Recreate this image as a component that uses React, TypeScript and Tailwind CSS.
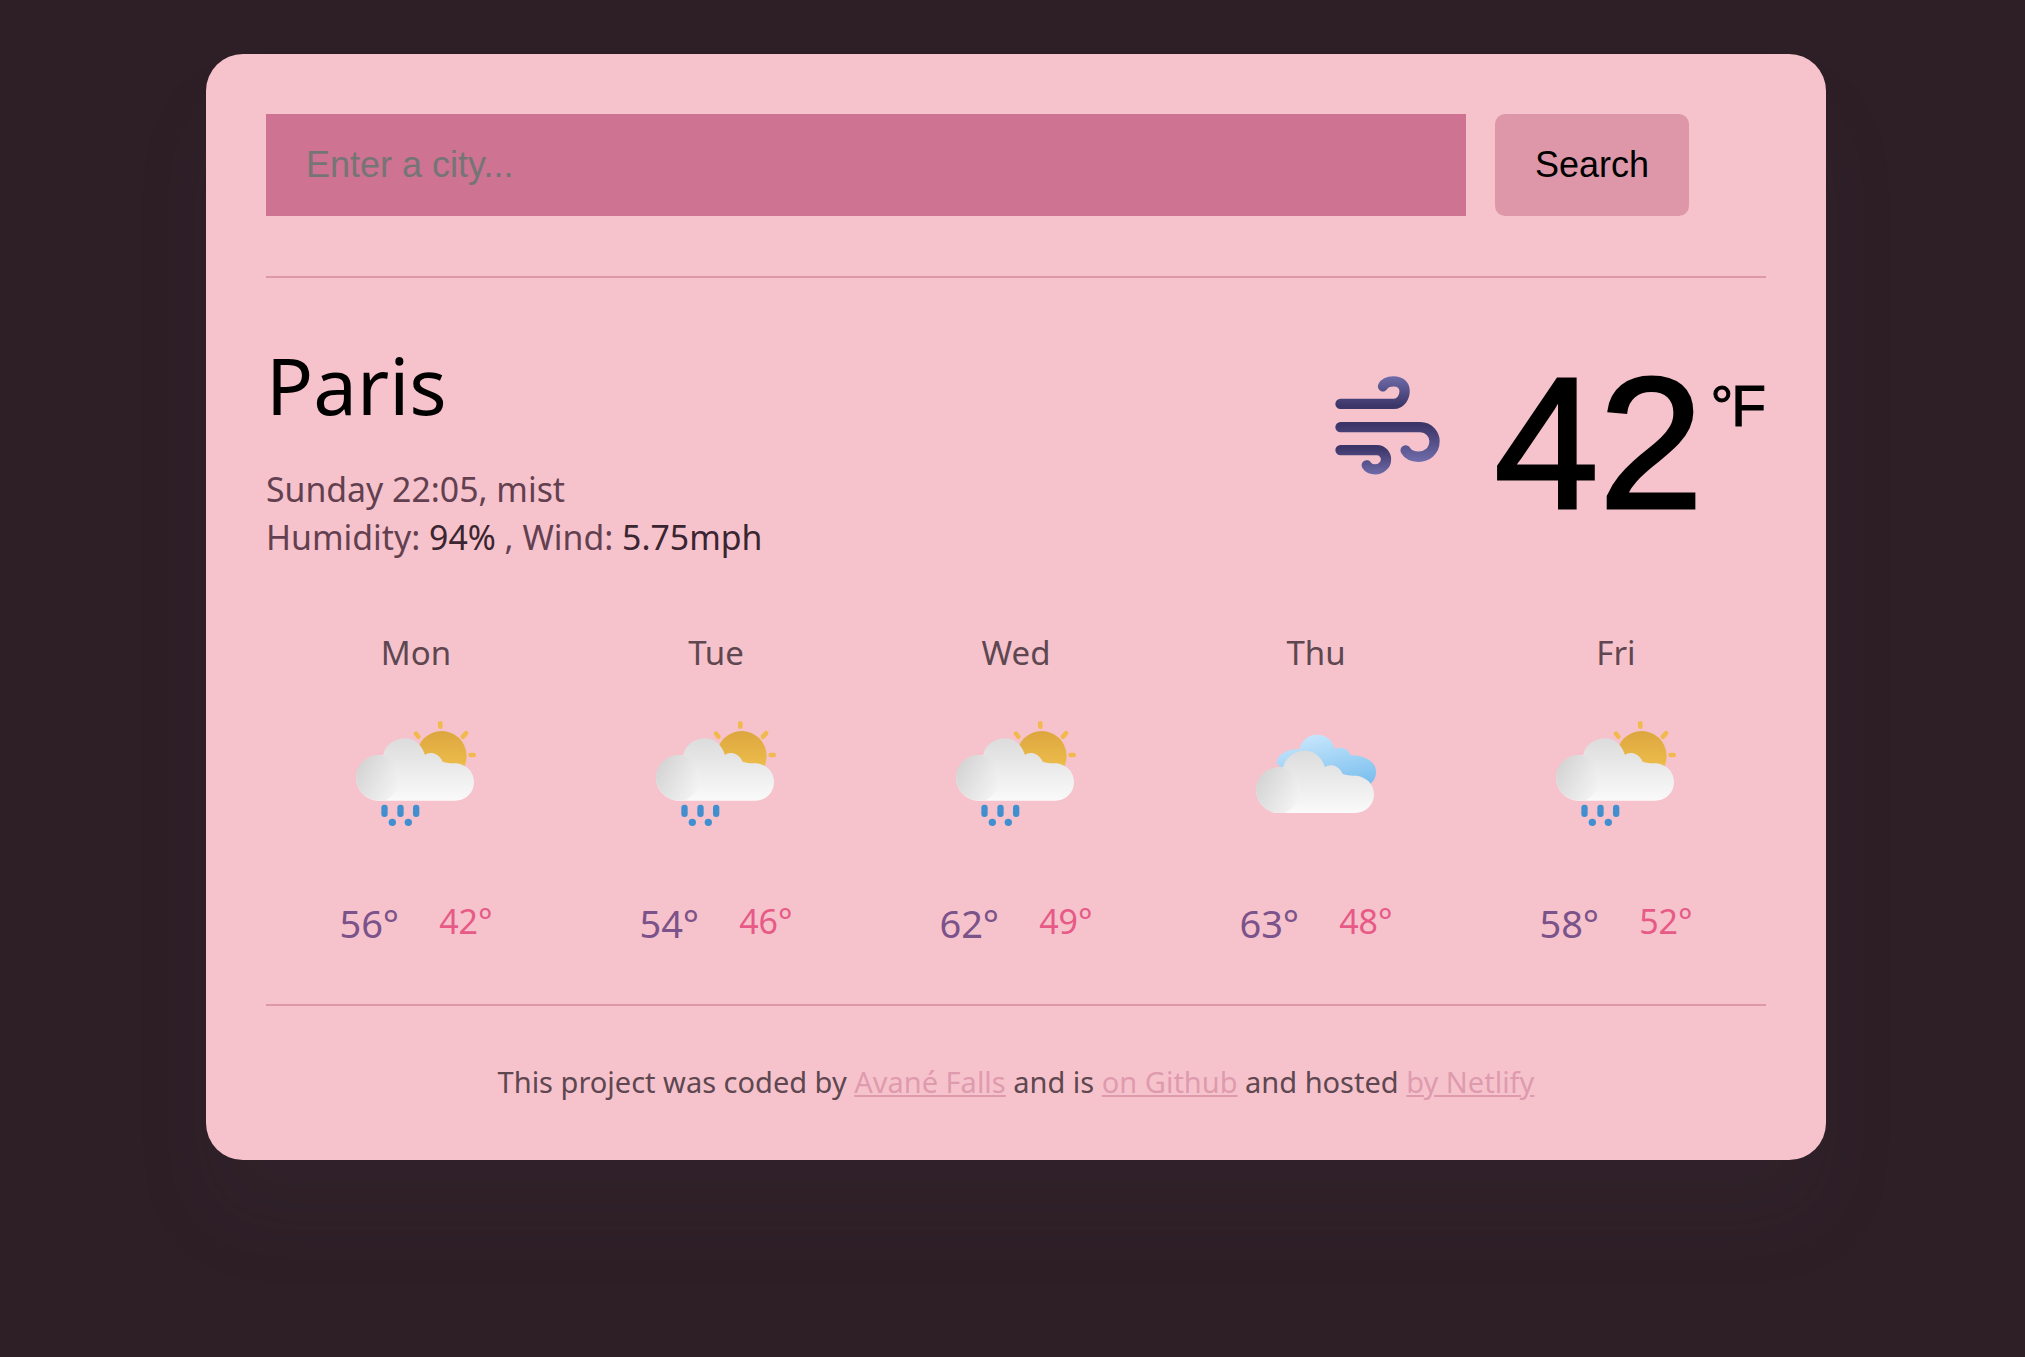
const sans = "font-['Noto_Sans','Lato',sans-serif]";

const days = [
  { name: "Mon", max: "56°", min: "42°", icon: "rain" },
  { name: "Tue", max: "54°", min: "46°", icon: "rain" },
  { name: "Wed", max: "62°", min: "49°", icon: "rain" },
  { name: "Thu", max: "63°", min: "48°", icon: "cloud" },
  { name: "Fri", max: "58°", min: "52°", icon: "rain" },
];

function CloudBody({ id }: { id: string }) {
  return (
    <>
      <defs>
        <linearGradient id={`${id}-body`} x1="0" y1="0" x2="0" y2="1">
          <stop offset="0" stopColor="#dcdcdc" />
          <stop offset="1" stopColor="#fafafa" />
        </linearGradient>
        <linearGradient id={`${id}-left`} x1="0" y1="0" x2="1" y2="0.6">
          <stop offset="0" stopColor="#cfcfcf" />
          <stop offset="1" stopColor="#f2f2f2" />
        </linearGradient>
      </defs>
      <path
        fill={`url(#${id}-body)`}
        d="M115 302 C80 302 48 270 48 234 C48 198 85 163 130 165 C135 135 165 115 195 115 C225 115 245 135 255 165 C265 155 295 155 308 185 C325 190 335 190 350 190 C380 195 402 215 402 246 C402 278 378 302 345 302 Z"
      />
      <path
        fill={`url(#${id}-left)`}
        d="M115 302 C80 302 48 270 48 232 C48 195 80 165 115 165 C150 165 180 195 180 232 C180 262 165 285 135 302 Z"
      />
    </>
  );
}

function RainIcon({ id }: { id: string }) {
  return (
    <svg width="160" height="150" viewBox="-12 0 480 450" className="blur-[0.5px]">
      <defs>
        <linearGradient id={`${id}-sun`} x1="0" y1="0" x2="0" y2="1">
          <stop offset="0" stopColor="#dda63f" />
          <stop offset="1" stopColor="#f3c650" />
        </linearGradient>
      </defs>
      <g stroke="#f2b94f" strokeWidth="14" strokeLinecap="round">
        <path d="M301 70 V80" />
        <path d="M228 101 L235 110" />
        <path d="M378 100 L369 110" />
        <path d="M392 165 H401" />
      </g>
      <circle cx="305" cy="168" r="75" fill={`url(#${id}-sun)`} />
      <CloudBody id={id} />
      <g fill="#418fcf">
        <rect x="124" y="314" width="19" height="37" rx="9" />
        <rect x="172" y="314" width="19" height="37" rx="9" />
        <rect x="219" y="314" width="19" height="37" rx="9" />
        <circle cx="157" cy="367" r="11" />
        <circle cx="205" cy="367" r="11" />
      </g>
    </svg>
  );
}

function CloudIcon({ id }: { id: string }) {
  return (
    <svg width="160" height="150" viewBox="-12 0 480 450" className="blur-[0.5px]">
      <defs>
        <linearGradient id={`${id}-sky`} x1="0" y1="0" x2="0.4" y2="1">
          <stop offset="0" stopColor="#d0ebfd" />
          <stop offset="1" stopColor="#7dc0ef" />
        </linearGradient>
      </defs>
      <g transform="translate(0 60)">
        <path
          fill={`url(#${id}-sky)`}
          d="M110 130 C110 105 140 85 178 88 C185 60 205 44 230 44 C258 44 278 60 285 88 C300 78 325 85 332 106 C375 105 408 125 408 155 C408 175 398 188 385 195 L200 220 Z"
        />
      </g>
      <g transform="translate(0 37)">
        <CloudBody id={id} />
      </g>
    </svg>
  );
}

function WindIcon() {
  return (
    <svg width="110" height="103" viewBox="100 100 330 310" fill="none" className="shrink-0">
      <defs>
        <linearGradient id="wind-a" gradientUnits="userSpaceOnUse" x1="0" y1="110" x2="0" y2="200">
          <stop offset="0" stopColor="#6e6ba9" />
          <stop offset="1" stopColor="#3c3568" />
        </linearGradient>
        <linearGradient id="wind-b" gradientUnits="userSpaceOnUse" x1="0" y1="255" x2="0" y2="365">
          <stop offset="0" stopColor="#3c3568" />
          <stop offset="1" stopColor="#6e6ba9" />
        </linearGradient>
        <linearGradient id="wind-c" gradientUnits="userSpaceOnUse" x1="0" y1="325" x2="0" y2="405">
          <stop offset="0" stopColor="#3c3568" />
          <stop offset="1" stopColor="#6e6ba9" />
        </linearGradient>
      </defs>
      <g strokeWidth="31" strokeLinecap="round">
        <path stroke="url(#wind-a)" d="M125 193 H285 C308 193 318 170 318 155 C318 135 303 125 285 125 C270 125 258 130 253 140" />
        <path stroke="url(#wind-b)" d="M125 263 H365 C392 263 408 285 408 305 C408 335 385 352 360 352 C343 352 328 345 321 333" />
        <path stroke="url(#wind-c)" d="M125 332 H235 C250 332 262 345 262 360 C262 378 245 390 230 390 C218 390 209 386 204 378" />
      </g>
    </svg>
  );
}

export default function App() {
  return (
    <div className="min-h-[1357px] bg-[#2e1f26] pt-[54px] pl-[206px]">
      <div className={`w-[1620px] h-[1106px] rounded-[37px] bg-[#f6c3cd] px-[60px] pt-[60px] shadow-[0_60px_80px_rgba(80,70,90,0.08)] ${sans}`}>
        <form className="flex gap-[29px] font-['Liberation_Sans',Arial,sans-serif]">
          <input
            type="text"
            placeholder="Enter a city..."
            className="w-[1200px] h-[102px] bg-[#ce7392] px-[40px] text-[36px] outline-none placeholder:text-[#757575]"
          />
          <button type="button" className="w-[194px] h-[102px] rounded-[10px] bg-[#dd97a8] text-[36px] text-black">
            Search
          </button>
        </form>
        <div className="h-[2px] bg-[#dd97a8] mt-[60px]" />

        <div className="flex justify-between mt-[60px]">
          <div>
            <h1 className="mt-[2px] text-[78px] leading-[90px] text-black">Paris</h1>
            <div className="mt-[35px] text-[33.8px] leading-[48px] text-[#63404f]">
              <p>Sunday 22:05, mist</p>
              <p>
                Humidity: <span className="text-[#3a2530]">94%</span> , Wind:{" "}
                <span className="text-[#3a2530]">5.75mph</span>
              </p>
            </div>
          </div>
          <div className="flex items-start mr-[2px] font-['Liberation_Sans',Arial,sans-serif]">
            <div className="mt-[35px] mr-[52px]">
              <WindIcon />
            </div>
            <span className="mt-[10px] text-[188px] leading-[190px] text-black [-webkit-text-stroke:3px_#000]">42</span>
            <span className="text-[57px] leading-[60px] mt-[38px] ml-[7px] tracking-[-2px] text-black [-webkit-text-stroke:1px_#000]">°F</span>
          </div>
        </div>

        <div className="grid grid-cols-5 mt-[68px]">
          {days.map((d) => (
            <div key={d.name} className="flex flex-col items-center">
              <div className="text-[33px] leading-[48px] text-[#5e4750]">{d.name}</div>
              <div className="mt-[23px] h-[150px]">
                {d.icon === "rain" ? <RainIcon id={d.name} /> : <CloudIcon id={d.name} />}
              </div>
              <div className="flex items-start justify-center gap-[40px] mt-[47px]">
                <span className="text-[38px] leading-[52px] text-[#7b5289]">{d.max}</span>
                <span className="mt-[1px] text-[34px] leading-[46px] text-[#e75a85]">{d.min}</span>
              </div>
            </div>
          ))}
        </div>

        <div className="h-[2px] bg-[#dd97a8] mt-[55px]" />
        <p className="mt-[56px] text-center text-[29px] leading-[40px] text-[#5e4750]">
          This project was coded by <a href="#" className="text-[#df9bae] underline">Avané Falls</a> and is{" "}
          <a href="#" className="text-[#df9bae] underline">on Github</a> and hosted{" "}
          <a href="#" className="text-[#df9bae] underline">by Netlify</a>
        </p>
      </div>
    </div>
  );
}
